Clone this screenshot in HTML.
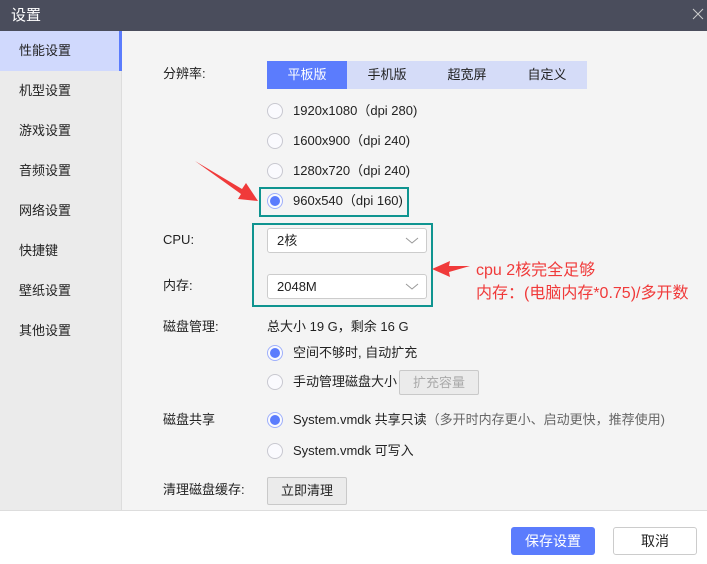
<!DOCTYPE html>
<html><head><meta charset="utf-8"><style>
*{margin:0;padding:0;box-sizing:border-box}
body{width:707px;height:564px;position:relative;overflow:hidden;background:#f4f4f4;font-family:"Liberation Sans","Noto Sans CJK SC",sans-serif;font-size:13px;line-height:16px;color:#222}
.a{position:absolute;white-space:nowrap}
.title{left:0;top:0;width:707px;height:31px;background:#4a4d5c;color:#fff;font-size:15px;line-height:31px;padding-left:11px}
.side{left:0;top:31px;width:122px;height:479px;background:#ebebeb;border-right:1px solid #ddd}
.si{position:absolute;left:0;width:122px;height:40px;line-height:40px;padding-left:19px;font-size:13px}
.act{background:#d0d9fd;border-right:3px solid #5b7cfd}
.tab{position:absolute;top:61px;height:28px;line-height:28px;text-align:center;width:80px;background:#d5dcf8;font-size:13px}
.r{position:absolute;width:16px;height:16px;border-radius:50%;border:1px solid #c8c8d0;background:#fafafe}
.r.on::after{content:"";position:absolute;left:2px;top:2px;width:10px;height:10px;border-radius:50%;background:#5b7cfd}
.r.on{border-color:#9fb0fb}
.sel{position:absolute;left:267px;width:160px;height:25px;border:1px solid #ccc;border-radius:3px;background:#fff;line-height:23px;padding-left:9px}
.sel svg{position:absolute;right:7px;top:8px}
.box{position:absolute;border:2px solid #0f9490}
.btn{position:absolute;border:1px solid #c9c9c9;background:#ebebeb;text-align:center;border-radius:2px}
.red{color:#f03a3a;font-size:16px;line-height:20px}
</style></head><body>
<div class="a title">设置</div>
<svg class="a" style="left:692px;top:8px" width="12" height="12"><path d="M1 1L11 11M11 1L1 11" stroke="#ccc" stroke-width="1"/></svg>
<div class="a side">
<div class="si act" style="top:0">性能设置</div>
<div class="si" style="top:40px">机型设置</div>
<div class="si" style="top:80px">游戏设置</div>
<div class="si" style="top:120px">音频设置</div>
<div class="si" style="top:160px">网络设置</div>
<div class="si" style="top:200px">快捷键</div>
<div class="si" style="top:240px">壁纸设置</div>
<div class="si" style="top:280px">其他设置</div>
</div>
<div class="a" style="left:163px;top:66px">分辨率:</div>
<div class="tab" style="left:267px;background:#5b7cfd;color:#fff">平板版</div>
<div class="tab" style="left:347px">手机版</div>
<div class="tab" style="left:427px">超宽屏</div>
<div class="tab" style="left:507px">自定义</div>
<div class="r" style="left:267px;top:103px"></div><div class="a" style="left:293px;top:103px">1920x1080（dpi 280)</div>
<div class="r" style="left:267px;top:133px"></div><div class="a" style="left:293px;top:133px">1600x900（dpi 240)</div>
<div class="r" style="left:267px;top:163px"></div><div class="a" style="left:293px;top:163px">1280x720（dpi 240)</div>
<div class="r on" style="left:267px;top:193px"></div><div class="a" style="left:293px;top:193px">960x540（dpi 160)</div>
<div class="box" style="left:259px;top:187px;width:150px;height:30px"></div>
<div class="a" style="left:163px;top:232px">CPU:</div>
<div class="sel" style="top:228px">2核<svg width="14" height="8"><path d="M1 1L7 6L13 1" fill="none" stroke="#999"/></svg></div>
<div class="a" style="left:163px;top:278px">内存:</div>
<div class="sel" style="top:274px">2048M<svg width="14" height="8"><path d="M1 1L7 6L13 1" fill="none" stroke="#999"/></svg></div>
<div class="box" style="left:252px;top:223px;width:181px;height:84px"></div>
<svg class="a" style="left:0;top:0" width="707" height="564"><polygon points="195,161 242,189 246,183 258,201 238,199 241,194" fill="#f03a3a"/><polygon points="432,269 450,261 449,266 470,266 449,272 450,277" fill="#f03a3a"/></svg>
<div class="a red" style="left:476px;top:261px">cpu 2核完全足够</div>
<div class="a red" style="left:476px;top:284px">内存：(电脑内存*0.75)/多开数</div>
<div class="a" style="left:163px;top:319px">磁盘管理:</div>
<div class="a" style="left:267px;top:319px">总大小 19 G，剩余 16 G</div>
<div class="r on" style="left:267px;top:345px"></div><div class="a" style="left:293px;top:345px">空间不够时, 自动扩充</div>
<div class="r" style="left:267px;top:374px"></div><div class="a" style="left:293px;top:374px">手动管理磁盘大小</div>
<div class="btn" style="left:399px;top:370px;width:80px;height:25px;line-height:23px;color:#aaa">扩充容量</div>
<div class="a" style="left:163px;top:412px">磁盘共享</div>
<div class="r on" style="left:267px;top:412px"></div><div class="a" style="left:293px;top:412px">System.vmdk 共享只读<span style="color:#666">（多开时内存更小、启动更快，推荐使用)</span></div>
<div class="r" style="left:267px;top:443px"></div><div class="a" style="left:293px;top:443px">System.vmdk 可写入</div>
<div class="a" style="left:163px;top:482px">清理磁盘缓存:</div>
<div class="btn" style="left:267px;top:477px;width:80px;height:28px;line-height:26px">立即清理</div>
<div class="a" style="left:0;top:510px;width:707px;height:54px;background:#fff;border-top:1px solid #ddd"></div>
<div class="a" style="left:511px;top:527px;width:84px;height:28px;line-height:28px;text-align:center;background:#5b7cfd;color:#fff;border-radius:3px;font-size:14px">保存设置</div>
<div class="a" style="left:613px;top:527px;width:84px;height:28px;line-height:26px;text-align:center;background:#fff;border:1px solid #ccc;border-radius:3px;font-size:14px">取消</div>
</body></html>
